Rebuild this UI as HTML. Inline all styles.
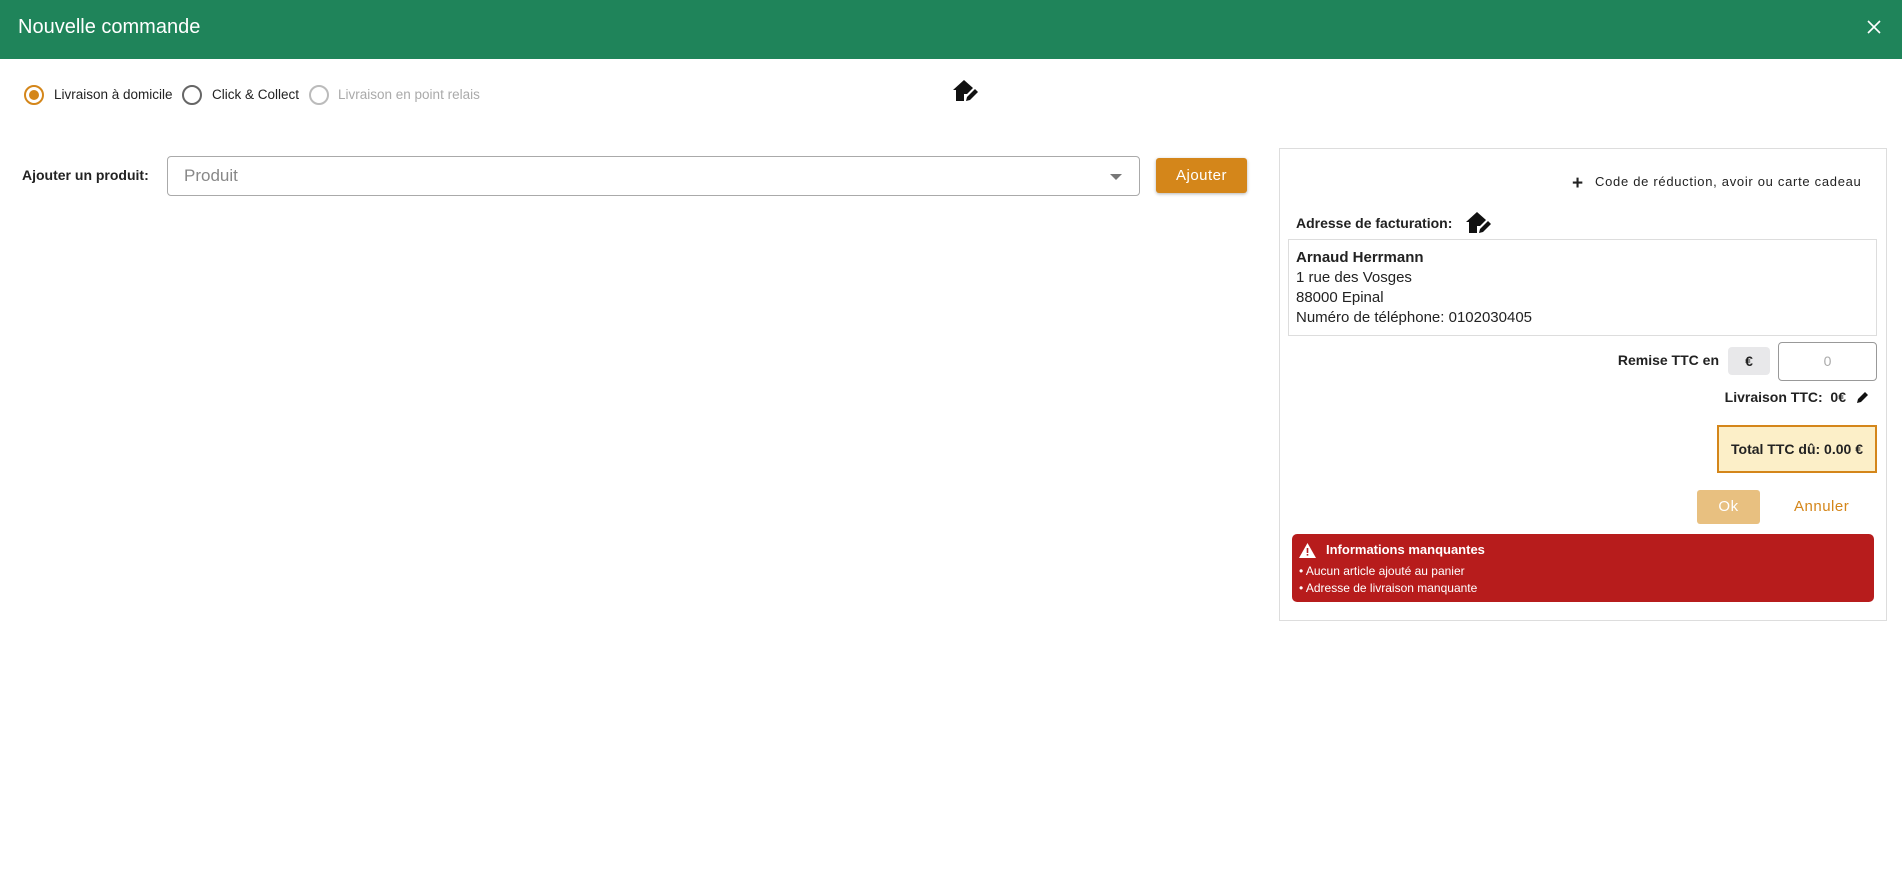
<!DOCTYPE html>
<html><head><meta charset="utf-8"><style>
*{box-sizing:border-box;margin:0;padding:0}
body{width:1902px;height:885px;background:#fff;font-family:"Liberation Sans",sans-serif;color:#222;position:relative;overflow:hidden}
.a{position:absolute;white-space:nowrap}
.hdr{left:0;top:0;width:1902px;height:59px;background:#1f845a}
.radio{width:20px;height:20px;border-radius:50%;border:2px solid #666}
</style></head><body>
<div class="a hdr"></div>
<div class="a" style="left:18px;top:16px;font-size:20px;color:#fff">Nouvelle commande</div>
<svg class="a" style="left:1867px;top:20px" width="14" height="14" viewBox="0 0 14 14"><path d="M1 1L13 13M13 1L1 13" stroke="#fff" stroke-width="1.6"/></svg>

<div class="a radio" style="left:24px;top:85px;border-color:#d4861a"></div>
<div class="a" style="left:29px;top:90px;width:10px;height:10px;border-radius:50%;background:#d4861a"></div>
<div class="a" style="left:54px;top:87px;font-size:13.5px">Livraison à domicile</div>
<div class="a radio" style="left:182px;top:85px"></div>
<div class="a" style="left:212px;top:87px;font-size:13.5px">Click &amp; Collect</div>
<div class="a radio" style="left:309px;top:85px;border-color:#bbb"></div>
<div class="a" style="left:338px;top:87px;font-size:13.5px;color:#aaa">Livraison en point relais</div>
<svg class="a" style="left:952px;top:79px" width="28" height="24" viewBox="0 0 28 24"><path d="M12 1L1 11h3v11h8v-7h3l6-6z" fill="#111"/><path d="M14 22l1-4 8-8 3 3-8 8z" fill="#111"/></svg>

<div class="a" style="left:22px;top:167px;font-size:14px;font-weight:bold">Ajouter un produit:</div>
<div class="a" style="left:167px;top:156px;width:973px;height:40px;border:1px solid #aaa;border-radius:4px"></div>
<div class="a" style="left:184px;top:166px;font-size:17px;color:#888">Produit</div>
<div class="a" style="left:1110px;top:174px;width:0;height:0;border-left:6px solid transparent;border-right:6px solid transparent;border-top:6px solid #777"></div>
<div class="a" style="left:1156px;top:158px;width:91px;height:35px;background:#d4861a;border-radius:3px;box-shadow:0 1px 3px rgba(0,0,0,.3);color:#fff;font-size:15px;text-align:center;line-height:35px;letter-spacing:.5px">Ajouter</div>

<div class="a" style="left:1279px;top:148px;width:608px;height:473px;border:1px solid #ddd"></div>
<div class="a" style="left:1572px;top:173px;font-size:19px;font-weight:bold">+</div>
<div class="a" style="left:1595px;top:174px;font-size:13px;letter-spacing:.7px">Code de réduction, avoir ou carte cadeau</div>
<div class="a" style="left:1296px;top:215px;font-size:14px;font-weight:bold">Adresse de facturation:</div>
<svg class="a" style="left:1465px;top:211px" width="28" height="24" viewBox="0 0 28 24"><path d="M12 1L1 11h3v11h8v-7h3l6-6z" fill="#111"/><path d="M14 22l1-4 8-8 3 3-8 8z" fill="#111"/></svg>
<div class="a" style="left:1288px;top:239px;width:589px;height:97px;border:1px solid #ddd"></div>
<div class="a" style="left:1296px;top:248px;font-size:15px;line-height:20px">
<b>Arnaud Herrmann</b><br>1 rue des Vosges<br>88000 Epinal<br>Numéro de téléphone: 0102030405</div>
<div class="a" style="left:1600px;top:352px;width:119px;text-align:right;font-size:14px;font-weight:bold">Remise TTC en</div>
<div class="a" style="left:1728px;top:347px;width:42px;height:28px;background:#e8e8ea;border-radius:4px;text-align:center;line-height:28px;font-size:14px;font-weight:bold">€</div>
<div class="a" style="left:1778px;top:342px;width:99px;height:39px;border:1px solid #999;border-radius:4px;text-align:center;line-height:37px;color:#aaa;font-size:14px">0</div>
<div class="a" style="left:1600px;top:389px;width:246px;text-align:right;font-size:14px;font-weight:bold">Livraison TTC:&nbsp; 0€</div>
<svg class="a" style="left:1856px;top:390px" width="14" height="14" viewBox="0 0 14 14"><path d="M1 13l1-4 7-7 3 3-7 7z" fill="#111"/></svg>
<div class="a" style="left:1717px;top:425px;width:160px;height:48px;background:#fcefc8;border:2px solid #d4861a;text-align:center;line-height:44px;font-size:14px;font-weight:bold">Total TTC dû: 0.00 €</div>
<div class="a" style="left:1697px;top:490px;width:63px;height:34px;background:#e8c080;border-radius:3px;color:#fff;text-align:center;line-height:34px;font-size:15px;letter-spacing:.5px">Ok</div>
<div class="a" style="left:1794px;top:498px;font-size:15px;color:#d4861a;letter-spacing:.5px">Annuler</div>
<div class="a" style="left:1292px;top:534px;width:582px;height:68px;background:#b71c1c;border-radius:5px;color:#fff">
<svg class="a" style="left:7px;top:9px" width="17" height="15" viewBox="0 0 17 15"><path d="M8.5 0L17 15H0z" fill="#fff"/><rect x="7.7" y="5" width="1.6" height="5" fill="#b71c1c"/><rect x="7.7" y="11" width="1.6" height="1.6" fill="#b71c1c"/></svg>
<div class="a" style="left:34px;top:8px;font-size:13px;font-weight:bold">Informations manquantes</div>
<div class="a" style="left:7px;top:29px;font-size:12px;line-height:17px">• Aucun article ajouté au panier<br>• Adresse de livraison manquante</div>
</div>
</body></html>
